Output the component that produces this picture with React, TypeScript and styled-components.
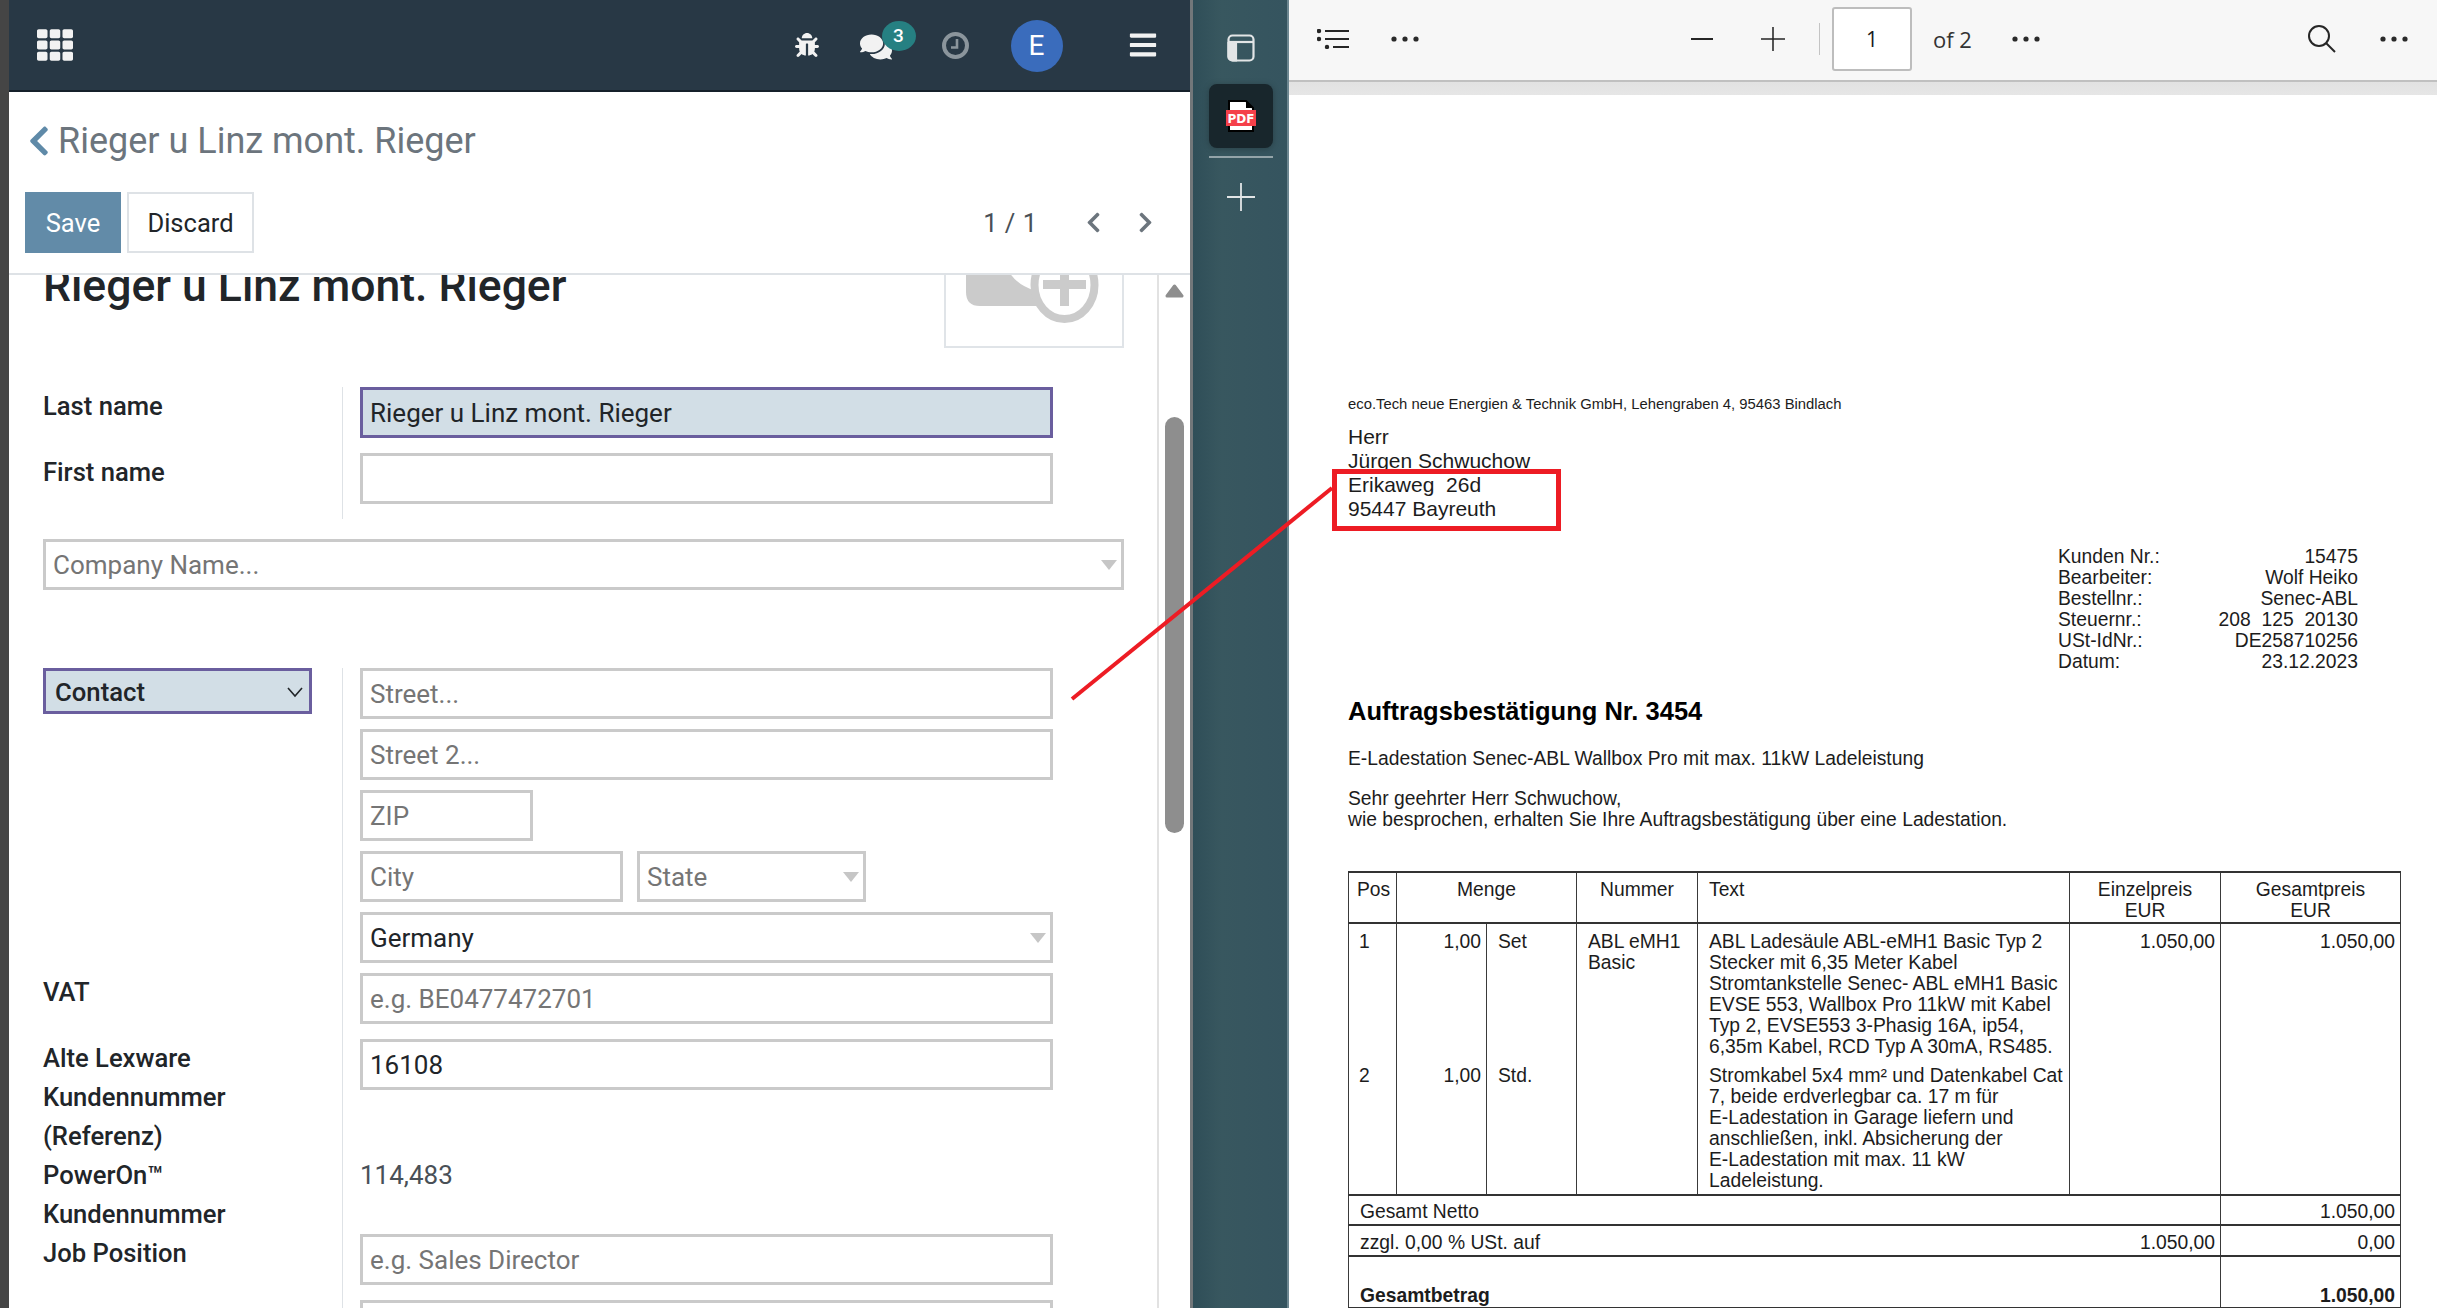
import { createGlobalStyle, styled } from 'styled-components';
import { FaBars, FaBug, FaChevronLeft, FaChevronRight, FaComments, FaTh } from 'react-icons/fa';

const GlobalStyle = createGlobalStyle`
  html, body {
    margin: 0;
    padding: 0;
    background: #fff;
  }
  * {
    box-sizing: border-box;
  }
`;

const Page = styled.div`
  position: relative;
  display: flex;
  width: 2437px;
  height: 1308px;
  overflow: hidden;
  font-family: Roboto, "Liberation Sans", sans-serif;
  background: #fff;
`;

const LeftEdge = styled.div`
  width: 9px;
  flex: none;
  background: #454545;
`;

const OdooPane = styled.div`
  width: 1181px;
  flex: none;
  display: flex;
  flex-direction: column;
  background: #fff;
`;

const Navbar = styled.div`
  height: 92px;
  flex: none;
  display: flex;
  align-items: center;
  padding: 0 32.5px 0 28px;
  background: #283845;
  border-bottom: 2px solid #15202a;
  color: #f2f2f2;
`;

const NavSpacer = styled.div`
  flex: 1;
`;

const NavIcon = styled.div<{ $left: number; $down?: number }>`
  position: relative;
  display: flex;
  margin-left: ${({ $left }) => $left}px;
  margin-top: ${({ $down }) => $down ?? 0}px;
`;

const Badge = styled.span`
  position: absolute;
  top: -9.5px;
  left: 22px;
  width: 34px;
  height: 30px;
  border-radius: 50%;
  background: #268082;
  color: #fff;
  font-size: 19px;
  font-weight: 500;
  line-height: 30px;
  text-align: center;
`;

const Avatar = styled.div`
  width: 52px;
  height: 52px;
  margin: 2px 0 0 42px;
  border-radius: 50%;
  background: #3a6cbc;
  color: #fff;
  font-size: 28px;
  line-height: 52px;
  text-align: center;
`;

const ControlPanel = styled.div`
  height: 183px;
  flex: none;
  padding: 27px 33px 0 16px;
  border-bottom: 2px solid #dee2e6;
`;

const Breadcrumb = styled.div`
  display: flex;
  align-items: center;
  gap: 2.5px;
  height: 44px;
  margin-left: -3.5px;
  color: #6c757d;
  font-size: 36px;
  svg {
    color: #5f8aa8;
    flex: none;
  }
`;

const ButtonRow = styled.div`
  display: flex;
  align-items: center;
  margin-top: 29px;
`;

const SaveButton = styled.div`
  width: 96px;
  height: 61px;
  background: #628ba8;
  color: #fff;
  font-size: 25.5px;
  line-height: 63px;
  text-align: center;
`;

const DiscardButton = styled.div`
  width: 127px;
  height: 61px;
  margin-left: 6px;
  border: 2px solid #dee2e6;
  color: #212529;
  font-size: 25.5px;
  line-height: 59px;
  text-align: center;
`;

const Pager = styled.div`
  display: flex;
  align-items: center;
  margin-left: auto;
  color: #495057;
  font-size: 25.5px;
  svg {
    color: #6c757d;
  }
`;

const PagerCount = styled.span`
  margin-right: 45px;
  word-spacing: 1px;
`;

const PagerGap = styled.span`
  width: 29px;
`;

const FormArea = styled.div`
  flex: 1;
  min-height: 0;
  display: flex;
  overflow: hidden;
`;

const FormSheet = styled.div`
  width: 1148px;
  flex: none;
  padding: 0 0 0 34px;
`;

const NameRow = styled.div`
  display: flex;
  justify-content: space-between;
  height: 112px;
`;

const NameHeading = styled.h1`
  margin: -22px 0 0;
  color: #212529;
  font-size: 44.5px;
  font-weight: 500;
  line-height: 66px;
  white-space: nowrap;
`;

const ImageBox = styled.div`
  width: 180px;
  height: 73px;
  margin-right: 33px;
  border: 2px solid #e0e4e8;
  border-top: none;
  overflow: hidden;
`;

const FormRow = styled.div`
  display: grid;
  grid-template-columns: 299px 709px;
`;

const Label = styled.div`
  color: #212529;
  font-size: 25.6px;
  font-weight: 500;
  line-height: 39px;
`;

const ValueCell = styled.div<{ $pad?: number }>`
  padding: 0 0 ${({ $pad }) => $pad ?? 15}px 17px;
  border-left: 1px solid #dee2e6;
`;

const Stack = styled.div`
  display: flex;
  flex-direction: column;
  gap: 10px;
`;

const InlineFields = styled.div`
  display: flex;
  gap: 14px;
`;

const Field = styled.div<{ $width?: number; $focused?: boolean; $empty?: boolean }>`
  position: relative;
  width: ${({ $width }) => ($width ? `${$width}px` : '693px')};
  height: 51px;
  padding: 0 7px;
  border: 3px solid ${({ $focused }) => ($focused ? '#6a5e9e' : '#cacaca')};
  background: ${({ $focused }) => ($focused ? '#d2dee6' : '#fff')};
  color: ${({ $empty }) => ($empty ? '#757575' : '#212529')};
  font-size: 26px;
  line-height: 47px;
`;

const Caret = styled.span`
  position: absolute;
  top: 18px;
  right: 4px;
  width: 0;
  height: 0;
  border-left: 8px solid transparent;
  border-right: 8px solid transparent;
  border-top: 10px solid #c6c6c6;
`;

const CompanyField = styled(Field)`
  width: 1081px;
  height: 51px;
  margin: 20px 0 78px;
`;

const TypeSelect = styled.div`
  display: flex;
  align-items: center;
  justify-content: space-between;
  width: 269px;
  height: 46px;
  padding: 2px 5px 0 9px;
  border: 3px solid #6a5e9e;
  background: #d2dee6;
  color: #212529;
  font-size: 25.7px;
  font-weight: 500;
`;

const PlainValue = styled.div`
  color: #495057;
  font-size: 26px;
  line-height: 39px;
`;

const ScrollTrack = styled.div`
  width: 33px;
  flex: none;
  padding: 9px 6px 0;
  border-left: 2px solid #e2e2e2;
`;

const ScrollUp = styled.svg`
  display: block;
`;

const ScrollThumb = styled.div`
  width: 19px;
  height: 416px;
  margin-top: 119px;
  border-radius: 10px;
  background: #8e8e8e;
`;

const Sidebar = styled.div`
  width: 99px;
  flex: none;
  display: flex;
  flex-direction: column;
  align-items: center;
  padding: 34px 0 0 2px;
  border-left: 3px solid #72777a;
  border-right: 2px solid #6d8791;
  background: linear-gradient(90deg, #2f4e58 0%, #38575f 30%, #35545f 100%);
`;

const TabsButton = styled.div`
  display: flex;
  height: 28px;
`;

const PdfTab = styled.div`
  display: flex;
  align-items: center;
  justify-content: center;
  width: 64px;
  height: 64px;
  margin-top: 22px;
  border-radius: 8px;
  background: #18262c;
  box-shadow: 0 1px 6px rgba(0, 0, 0, 0.25);
`;

const SideDivider = styled.div`
  width: 64px;
  height: 2px;
  margin-top: 8px;
  background: #94a4a9;
`;

const AddTab = styled.div`
  display: flex;
  margin-top: 25px;
`;

const PdfPane = styled.div`
  flex: 1;
  min-width: 0;
  display: flex;
  flex-direction: column;
`;

const PdfToolbar = styled.div`
  height: 82px;
  flex: none;
  display: flex;
  align-items: center;
  padding: 0 28px 2px;
  background: #f7f7f7;
  border-bottom: 2px solid #c0c0c0;
  color: #262626;
`;

const ToolButton = styled.div<{ $left: number }>`
  display: flex;
  margin-left: ${({ $left }) => $left}px;
`;

const ToolSeparator = styled.div`
  width: 1px;
  height: 32px;
  margin-left: 34px;
  background: #c4c4c4;
`;

const PageInput = styled.div`
  width: 80px;
  height: 64px;
  margin-left: 12px;
  border: 2px solid #bdbdbd;
  border-radius: 3px;
  background: #fff;
  color: #1a1a1a;
  font-family: "Open Sans", sans-serif;
  font-size: 21px;
  line-height: 60px;
  text-align: center;
`;

const PageTotal = styled.span`
  margin-left: 21px;
  color: #333;
  font-family: "Open Sans", sans-serif;
  font-size: 22px;
`;

const ShadowStrip = styled.div`
  height: 13px;
  flex: none;
  background: linear-gradient(180deg, #e2e2e2, #e6e6e6);
`;

const PdfSheet = styled.div`
  flex: 1;
  min-height: 0;
  padding: 301px 37px 0 59px;
  background: #fff;
  color: #1c1c1c;
  font-family: "Liberation Sans", Arial, sans-serif;
  font-size: 19.3px;
  line-height: 21px;
`;

const SenderLine = styled.div`
  font-size: 14.83px;
  line-height: 16px;
`;

const AddressBlock = styled.div`
  margin-top: 13px;
  font-size: 21px;
  line-height: 24px;
`;

const InfoGrid = styled.div`
  display: grid;
  margin: 25px 0 0 710px;
  width: 300px;
`;

const InfoRow = styled.div`
  display: flex;
  justify-content: space-between;
  white-space: pre;
`;

const DocTitle = styled.h2`
  margin: 24px 0 0;
  color: #000;
  font-size: 25.5px;
  font-weight: 700;
  line-height: 30px;
`;

const Subject = styled.p`
  margin: 21.5px 0 0;
`;

const Salutation = styled.p`
  margin: 19.5px 0 0;
`;

const DocTable = styled.table`
  width: 1052px;
  margin-top: 41px;
  border-collapse: collapse;
  table-layout: fixed;
  line-height: 21px;
`;

const paddingLeft = { left: '11px', right: '5px', center: '5px', first: '8px', index: '10px' };

const Cell = styled.td<{
  $align?: 'left' | 'right' | 'center' | 'first' | 'index';
  $top?: boolean;
  $bottom?: boolean;
  $bold?: boolean;
  $pt?: number;
  $pb?: number;
  $noLeft?: boolean;
  $noRight?: boolean;
}>`
  padding: ${({ $pt }) => $pt ?? 7}px 5px ${({ $pb }) => $pb ?? 0}px ${({ $align }) => paddingLeft[$align ?? 'left']};
  border-left: ${({ $noLeft }) => ($noLeft ? 'none' : '1px solid #3a3a3a')};
  border-right: ${({ $noRight }) => ($noRight ? 'none' : '1px solid #3a3a3a')};
  border-top: ${({ $top }) => ($top ? '2px solid #333' : 'none')};
  border-bottom: ${({ $bottom }) => ($bottom ? '2px solid #333' : 'none')};
  font-weight: ${({ $bold }) => ($bold ? 700 : 400)};
  text-align: ${({ $align }) => ($align === 'right' || $align === 'center' ? $align : 'left')};
  vertical-align: top;
`;

const RedBox = styled.div`
  position: absolute;
  left: 1332px;
  top: 469px;
  width: 229px;
  height: 62px;
  border: 5px solid #ed1c24;
`;

const RedLine = styled.svg`
  position: absolute;
  left: 1060px;
  top: 480px;
`;

function Chevron() {
  return (
    <svg width="18" height="12" viewBox="0 0 18 12" fill="none" stroke="#212529" strokeWidth="1.6">
      <path d="M2 2 L9 10 L16 2" />
    </svg>
  );
}

function MoreDots() {
  return (
    <svg width="28" height="6" viewBox="0 0 28 6" fill="#2a2a2a">
      <circle cx="3" cy="3" r="2.6" />
      <circle cx="14" cy="3" r="2.6" />
      <circle cx="25" cy="3" r="2.6" />
    </svg>
  );
}

function AvatarPlaceholder() {
  return (
    <svg width="176" height="73" viewBox="0 0 176 73" style={{ display: 'block' }}>
      <path d="M20 -5 H62 Q70 10 90 16 V31 H34 Q20 31 20 17 Z" fill="#cbcbcb" />
      <ellipse cx="118.5" cy="10" rx="30" ry="34" fill="#fff" stroke="#cbcbcb" strokeWidth="8" />
      <rect x="97" y="5" width="43" height="9" fill="#cbcbcb" />
      <rect x="114" y="-12" width="9" height="43" fill="#cbcbcb" />
    </svg>
  );
}

function ClockIcon() {
  return (
    <svg width="27" height="27" viewBox="0 0 27 27" fill="none" stroke="#8b959c" strokeWidth="4">
      <circle cx="13.5" cy="13.5" r="11.5" />
      <path d="M15 7 V15.5 H9" strokeWidth="2.6" />
    </svg>
  );
}

function PdfFileIcon() {
  return (
    <svg width="30" height="32" viewBox="0 0 30 32">
      <path d="M3 1 H20 L27 8 V31 H3 Z" fill="#fff" stroke="#000" strokeWidth="2" />
      <path d="M20 1 V8 H27" fill="#000" />
      <rect x="0" y="10" width="30" height="16" fill="#f5404a" />
      <text x="15" y="22.5" fill="#fff" fontSize="12" fontWeight="700" textAnchor="middle" fontFamily="DejaVu Sans, sans-serif">PDF</text>
    </svg>
  );
}

function TocIcon() {
  return (
    <svg width="32" height="20" viewBox="0 0 32 20" fill="#262626" stroke="#262626" strokeWidth="2">
      <path d="M8 2 H32 M8 10 H32 M16 18 H32" fill="none" />
      <circle cx="2" cy="2" r="1.2" />
      <circle cx="2" cy="10" r="1.2" />
      <circle cx="10" cy="18" r="1.2" />
    </svg>
  );
}

function ThinPlus({ size, color }: { size: number; color: string }) {
  return (
    <svg width={size} height={size} viewBox="0 0 28 28" stroke={color} strokeWidth="1.8">
      <path d="M14 0 V28 M0 14 H28" />
    </svg>
  );
}

function SearchIcon() {
  return (
    <svg width="28" height="28" viewBox="0 0 28 28" fill="none" stroke="#262626" strokeWidth="2">
      <circle cx="11" cy="11" r="10" />
      <path d="M18 18 L27 27" />
    </svg>
  );
}

function PanelIcon() {
  return (
    <svg width="28" height="28" viewBox="0 0 28 28" fill="none" stroke="#e2e5e6" strokeWidth="2.2">
      <path d="M1.5 9 H9 V26.5 H5.5 A4 4 0 0 1 1.5 22.5 Z" fill="#e2e5e6" />
      <rect x="1.5" y="1.5" width="25" height="25" rx="4" />
      <path d="M1.5 8 H26.5" />
    </svg>
  );
}

const infoRows = [
  ['Kunden Nr.:', '15475'],
  ['Bearbeiter:', 'Wolf Heiko'],
  ['Bestellnr.:', 'Senec-ABL'],
  ['Steuernr.:', '208  125  20130'],
  ['USt-IdNr.:', 'DE258710256'],
  ['Datum:', '23.12.2023'],
];

export default function App() {
  return (
    <Page>
      <GlobalStyle />
      <LeftEdge />
      <OdooPane>
        <Navbar>
          <FaTh size={36} />
          <NavSpacer />
          <NavIcon $left={0}><FaBug size={24} /></NavIcon>
          <NavIcon $left={41} $down={3}>
            <FaComments size={32} />
            <Badge>3</Badge>
          </NavIcon>
          <NavIcon $left={50}><ClockIcon /></NavIcon>
          <Avatar>E</Avatar>
          <NavIcon $left={65}><FaBars size={30} /></NavIcon>
        </Navbar>
        <ControlPanel>
          <Breadcrumb>
            <FaChevronLeft size={34} />
            Rieger u Linz mont. Rieger
          </Breadcrumb>
          <ButtonRow>
            <SaveButton>Save</SaveButton>
            <DiscardButton>Discard</DiscardButton>
            <Pager>
              <PagerCount>1 / 1</PagerCount>
              <FaChevronLeft size={23} />
              <PagerGap />
              <FaChevronRight size={23} />
            </Pager>
          </ButtonRow>
        </ControlPanel>
        <FormArea>
          <FormSheet>
            <NameRow>
              <NameHeading>Rieger u Linz mont. Rieger</NameHeading>
              <ImageBox><AvatarPlaceholder /></ImageBox>
            </NameRow>
            <FormRow>
              <Label>Last name</Label>
              <ValueCell><Field $focused>Rieger u Linz mont. Rieger</Field></ValueCell>
            </FormRow>
            <FormRow>
              <Label>First name</Label>
              <ValueCell><Field /></ValueCell>
            </FormRow>
            <CompanyField $empty>Company Name...<Caret /></CompanyField>
            <FormRow>
              <div><TypeSelect>Contact<Chevron /></TypeSelect></div>
              <ValueCell $pad={10}>
                <Stack>
                  <Field $empty>Street...</Field>
                  <Field $empty>Street 2...</Field>
                  <Field $empty $width={173}>ZIP</Field>
                  <InlineFields>
                    <Field $empty $width={263}>City</Field>
                    <Field $empty $width={229}>State<Caret /></Field>
                  </InlineFields>
                  <Field>Germany<Caret /></Field>
                </Stack>
              </ValueCell>
            </FormRow>
            <FormRow>
              <Label>VAT</Label>
              <ValueCell><Field $empty>e.g. BE0477472701</Field></ValueCell>
            </FormRow>
            <FormRow>
              <Label>Alte Lexware Kundennummer (Referenz)</Label>
              <ValueCell $pad={0}><Field>16108</Field></ValueCell>
            </FormRow>
            <FormRow>
              <Label>PowerOn™<br />Kundennummer</Label>
              <ValueCell $pad={0}><PlainValue>114,483</PlainValue></ValueCell>
            </FormRow>
            <FormRow>
              <Label>Job Position</Label>
              <ValueCell><Field $empty>e.g. Sales Director</Field></ValueCell>
            </FormRow>
            <FormRow>
              <Label />
              <ValueCell><Field /></ValueCell>
            </FormRow>
          </FormSheet>
          <ScrollTrack>
            <ScrollUp width="19" height="14" viewBox="0 0 19 14">
              <path d="M9.5 2 L17 12 H2 Z" fill="#8e8e8e" stroke="#8e8e8e" strokeWidth="3" strokeLinejoin="round" />
            </ScrollUp>
            <ScrollThumb />
          </ScrollTrack>
        </FormArea>
      </OdooPane>
      <Sidebar>
        <TabsButton><PanelIcon /></TabsButton>
        <PdfTab><PdfFileIcon /></PdfTab>
        <SideDivider />
        <AddTab><ThinPlus size={28} color="#e2e5e6" /></AddTab>
      </Sidebar>
      <PdfPane>
        <PdfToolbar>
          <TocIcon />
          <ToolButton $left={42}><MoreDots /></ToolButton>
          <ToolButton $left={272}>
            <svg width="22" height="2" viewBox="0 0 22 2"><rect width="22" height="2" fill="#262626" /></svg>
          </ToolButton>
          <ToolButton $left={48}><ThinPlus size={24} color="#262626" /></ToolButton>
          <ToolSeparator />
          <PageInput>1</PageInput>
          <PageTotal>of 2</PageTotal>
          <ToolButton $left={40}><MoreDots /></ToolButton>
          <ToolButton $left={268}><SearchIcon /></ToolButton>
          <ToolButton $left={44}><MoreDots /></ToolButton>
        </PdfToolbar>
        <ShadowStrip />
        <PdfSheet>
          <SenderLine>eco.Tech neue Energien &amp; Technik GmbH, Lehengraben 4, 95463 Bindlach</SenderLine>
          <AddressBlock>
            Herr<br />
            Jürgen Schwuchow<br />
            Erikaweg&nbsp;&nbsp;26d<br />
            95447 Bayreuth
          </AddressBlock>
          <InfoGrid>
            {infoRows.map(([label, value]) => (
              <InfoRow key={label}><span>{label}</span><span>{value}</span></InfoRow>
            ))}
          </InfoGrid>
          <DocTitle>Auftragsbestätigung Nr. 3454</DocTitle>
          <Subject>E-Ladestation Senec-ABL Wallbox Pro mit max. 11kW Ladeleistung</Subject>
          <Salutation>
            Sehr geehrter Herr Schwuchow,<br />
            wie besprochen, erhalten Sie Ihre Auftragsbestätigung über eine Ladestation.
          </Salutation>
          <DocTable>
            <colgroup>
              <col style={{ width: 48 }} />
              <col style={{ width: 90 }} />
              <col style={{ width: 90 }} />
              <col style={{ width: 121 }} />
              <col style={{ width: 372 }} />
              <col style={{ width: 151 }} />
              <col style={{ width: 180 }} />
            </colgroup>
            <tbody>
              <tr style={{ height: 51 }}>
                <Cell $top $bottom $pt={6} $align="first">Pos</Cell>
                <Cell $top $bottom $pt={6} $align="center" colSpan={2}>Menge</Cell>
                <Cell $top $bottom $pt={6} $align="center">Nummer</Cell>
                <Cell $top $bottom $pt={6}>Text</Cell>
                <Cell $top $bottom $pt={6} $align="center">Einzelpreis<br />EUR</Cell>
                <Cell $top $bottom $pt={6} $align="center">Gesamtpreis<br />EUR</Cell>
              </tr>
              <tr>
                <Cell $align="index">1</Cell>
                <Cell $align="right">1,00</Cell>
                <Cell>Set</Cell>
                <Cell>ABL eMH1<br />Basic</Cell>
                <Cell>
                  ABL Ladesäule ABL-eMH1 Basic Typ 2<br />
                  Stecker mit 6,35 Meter Kabel<br />
                  Stromtankstelle Senec- ABL eMH1 Basic<br />
                  EVSE 553, Wallbox Pro 11kW mit Kabel<br />
                  Typ 2, EVSE553 3-Phasig 16A, ip54,<br />
                  6,35m Kabel, RCD Typ A 30mA, RS485.
                </Cell>
                <Cell $align="right">1.050,00</Cell>
                <Cell $align="right">1.050,00</Cell>
              </tr>
              <tr>
                <Cell $bottom $pt={8} $align="index">2</Cell>
                <Cell $bottom $pt={8} $align="right">1,00</Cell>
                <Cell $bottom $pt={8}>Std.</Cell>
                <Cell $bottom $pt={8} />
                <Cell $bottom $pt={8} $pb={3}>
                  Stromkabel 5x4 mm² und Datenkabel Cat<br />
                  7, beide erdverlegbar ca. 17 m für<br />
                  E-Ladestation in Garage liefern und<br />
                  anschließen, inkl. Absicherung der<br />
                  E-Ladestation mit max. 11 kW<br />
                  Ladeleistung.
                </Cell>
                <Cell $bottom $pt={8} />
                <Cell $bottom $pt={8} />
              </tr>
              <tr style={{ height: 30 }}>
                <Cell $bottom $pt={5} colSpan={6}>Gesamt Netto</Cell>
                <Cell $bottom $pt={5} $align="right">1.050,00</Cell>
              </tr>
              <tr style={{ height: 31 }}>
                <Cell $bottom $pt={6} $noRight colSpan={5}>zzgl. 0,00 % USt. auf</Cell>
                <Cell $bottom $pt={6} $noLeft $align="right">1.050,00</Cell>
                <Cell $bottom $pt={6} $align="right">0,00</Cell>
              </tr>
              <tr style={{ height: 52 }}>
                <Cell $bottom $bold $pt={28} colSpan={6}>Gesamtbetrag</Cell>
                <Cell $bottom $bold $pt={28} $align="right">1.050,00</Cell>
              </tr>
            </tbody>
          </DocTable>
        </PdfSheet>
      </PdfPane>
      <RedBox />
      <RedLine width="280" height="230" viewBox="0 0 280 230">
        <path d="M12 219 L272 8" stroke="#ed1c24" strokeWidth="4" fill="none" />
      </RedLine>
    </Page>
  );
}
